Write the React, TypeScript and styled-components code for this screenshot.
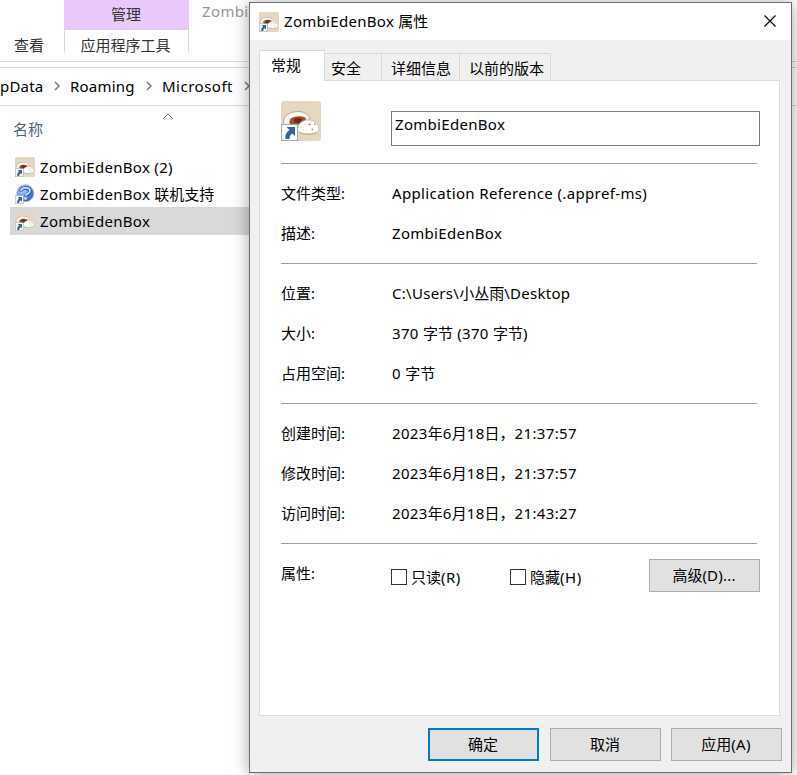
import React from "react";
import styled, { createGlobalStyle } from "styled-components";

const GlobalStyle = createGlobalStyle`
  * { box-sizing: border-box; }
  body {
    margin: 0;
    background: #fff;
    color: #000;
    font: 15px/20px "Noto Sans", "Noto Sans CJK SC", sans-serif;
    overflow: hidden;
  }
`;

const Desktop = styled.main`
  position: relative;
  width: 797px;
  height: 775px;
  overflow: hidden;
  background: #fff;
`;

const Text = styled.span`
  display: block;
  height: 20px;
  white-space: pre;
  margin: -1px 0 1px;
`;

/* ---------- Explorer ---------- */

const Explorer = styled.section`
  display: flex;
  flex-direction: column;
  height: 100%;
`;

const Ribbon = styled.header`
  display: grid;
  grid-template-columns: 64px 125px 1fr;
  height: 62px;
  border-bottom: 1px solid #dadbdc;
`;

const RibbonTab = styled.div`
  padding: 35px 0 0 14px;
  color: #333;
`;

const ContextTab = styled.div`
  display: flex;
  flex-direction: column;
`;

const ContextTitle = styled.div`
  height: 30px;
  padding: 4px 1px 0 0;
  text-align: center;
  color: #333;
  background: #e9c9fc;
`;

const ContextName = styled.div`
  height: 24px;
  padding: 6px 2px 0 0;
  display: flex;
  justify-content: center;
  color: #333;
  border: 1px solid;
  border-width: 0 1px;
  border-image: linear-gradient(#dcdcdc, #d4d4d4 70%, #f4f4f4) 1;
`;

const WindowTitle = styled.div`
  padding: 2px 0 0 13px;
  color: #999;
`;

const AddressBar = styled.nav`
  display: flex;
  align-items: center;
  height: 39px;
  margin-top: 5px;
  border-top: 1px solid #d9d9d9;
  border-bottom: 1px solid #d9d9d9;
`;

const Crumb = styled.div<{ $width: number }>`
  flex: none;
  width: ${(p) => p.$width}px;
`;

const Chevron = styled.svg<{ $gap: number }>`
  flex: none;
  display: block;
  margin: -2px ${(p) => p.$gap}px 0 0;
`;

const ColumnHeader = styled.div`
  display: flex;
  height: 47px;
  padding: 14px 0 0 13px;
  color: #4c607a;
`;

const SortArrow = styled.svg`
  display: block;
  margin: -7px 0 0 120px;
`;

const FileList = styled.div`
  display: flex;
  flex-direction: column;
  padding-left: 10px;
`;

const FileRow = styled.div<{ $selected?: boolean }>`
  display: flex;
  align-items: center;
  gap: 5px;
  width: 500px;
  height: ${(p) => (p.$selected ? 28 : 27)}px;
  padding-left: 5px;
  background: ${(p) => (p.$selected ? "#d9d9d9" : "transparent")};

  ${Text} {
    margin: 0;
  }
`;

/* ---------- Dialog ---------- */

const Dialog = styled.section`
  position: absolute;
  left: 249px;
  top: 2px;
  width: 543px;
  height: 771px;
  display: flex;
  flex-direction: column;
  border: 1px solid #6e6e6e;
  background: #f0f0f0;
  box-shadow: 0 1px 16px rgba(0, 0, 0, 0.36);
`;

const TitleBar = styled.header`
  display: flex;
  align-items: center;
  height: 37px;
  padding: 0 15px 0 9px;
  background: #fff;
`;

const Caption = styled.div`
  flex: 1;
  padding-left: 5px;
`;

const CloseIcon = styled.svg`
  display: block;
  flex: none;
  margin-top: -1px;
`;

const Tabs = styled.div`
  display: flex;
  align-items: flex-end;
  height: 40px;
  margin: 0 0 0 9px;
`;

const Tab = styled.div<{ $width: number; $pad: number; $active?: boolean }>`
  position: relative;
  width: ${(p) => p.$width}px;
  height: ${(p) => (p.$active ? 31 : 27)}px;
  margin-bottom: ${(p) => (p.$active ? -1 : 0)}px;
  padding: 4px 0 0 ${(p) => p.$pad}px;
  border: 1px solid #d9d9d9;
  border-bottom: 0;
  border-left-width: ${(p) => (p.$active ? 1 : 0)}px;
  background: ${(p) => (p.$active ? "#fff" : "#f0f0f0")};
  z-index: ${(p) => (p.$active ? 1 : 0)};
`;

const Panel = styled.div`
  height: 636px;
  margin: 0 11px 0 9px;
  padding: 0 19px 0 21px;
  border: 1px solid #dcdcdc;
  background: #fff;
`;

const FileHead = styled.div`
  display: flex;
  align-items: flex-start;
  height: 82px;
  padding-top: 20px;
`;

const NameField = styled.div`
  width: 369px;
  height: 35px;
  margin: 10px 0 0 70px;
  padding: 3px 0 0 3px;
  border: 1px solid #7a7a7a;
  background: #fff;
`;

const Group = styled.div`
  width: 476px;
  padding: 10px 0 9px;
  border-top: 1px solid #a0a0a0;
`;

const Property = styled.div`
  display: grid;
  grid-template-columns: 111px 1fr;
  align-items: center;
  height: 40px;
`;

const Divider = styled.div`
  width: 476px;
  height: 1px;
  background: #a0a0a0;
`;

const Attributes = styled.div`
  display: flex;
  align-items: flex-start;
  width: 479px;
  height: 60px;
`;

const AttributeLabel = styled.div`
  width: 110px;
  padding-top: 20px;
`;

const CheckOption = styled.div<{ $width: number }>`
  display: flex;
  align-items: center;
  gap: 4px;
  width: ${(p) => p.$width}px;
  height: 16px;
  margin-top: 25px;

  ${Text} {
    margin: 0;
  }
`;

const CheckBox = styled.span`
  width: 16px;
  height: 16px;
  border: 1px solid #333;
  background: #fff;
`;

const Button = styled.button<{ $primary?: boolean }>`
  display: flex;
  align-items: center;
  justify-content: center;
  width: 111px;
  height: 33px;
  padding: 0 1px 0 0;
  font: inherit;
  color: #000;
  border: ${(p) => (p.$primary ? "2px solid #0078d7" : "1px solid #adadad")};
  background: #e1e1e1;
`;

const AdvancedSlot = styled.div`
  margin-top: 15px;
`;

const Footer = styled.footer`
  display: grid;
  grid-template-columns: 122px 121px 111px;
  justify-content: end;
  padding: 12px 9px 0 0;
`;

const Icon = styled.svg`
  display: block;
  flex: none;
`;

const ShortcutArrow = () => (
  <g>
    <rect x="0.5" y="23.500" width="16" height="16" fill="#f8f8f8" stroke="#a5a9ae" />
    <path d="M5.500 26H14v9l-2.800-2.600C9 34 8.500 35.500 8.500 38H4.500c-.6-4 .8-7 4-9z" fill="#2f64a6" />
  </g>
);

function BunIcon({ size }: { size: number }) {
  return (
    <Icon width={size} height={size} viewBox="0 0 40 40">
      <rect width="40" height="40" rx="3" fill="#e6d8c0" />
      <path d="M2.500 21c0-6 6-10 13-10.500 7-.4 13 2.500 13.500 8.500l-6 10-14 0c-4-1-6.500-4-6.500-8z" fill="#f4f2ea" stroke="#a39c8c" strokeWidth=".8" />
      <path d="M5 18c3-5 7-6 11-6s8 1.500 10 4.500c-7-2.500-15-2-21 1.500z" fill="#fffef9" />
      <path d="M9.500 18c3-3 10-3.500 15-1.500l.5 3c-2 2-4 3.500-8 4.500-3 .5-6 .4-7.500-.5s-1.500-3.500 0-5.500z" fill="#a3522f" />
      <path d="M13 17.500l5-.8 3.500 1.800-3.500 3.500-4.500-.5z" fill="#6f2810" />
      <path d="M16.500 28c0-5 5-9 11-9.200 5-.1 10.500 4.200 10.500 8.700 0 3.500-4 5.500-10 5.500s-11.500-1-11.500-5z" fill="#fbfbf7" stroke="#b5afa2" strokeWidth=".8" />
      <path d="M18 31.500c5 2 13 2.500 18 .5" fill="none" stroke="#bbb09a" />
      <path d="M27.500 23l1.800.9m4-1.200 1 1m-3.800 4.300 1.600.6" stroke="#85847e" strokeWidth="1.300" />
      <ShortcutArrow />
    </Icon>
  );
}

function HelpIcon() {
  return (
    <Icon width="20" height="20" viewBox="0 0 40 40">
      <defs>
        <radialGradient id="ball" cx=".35" cy=".3" r=".8">
          <stop offset="0" stopColor="#b4d2fb" />
          <stop offset=".5" stopColor="#6c9cec" />
          <stop offset="1" stopColor="#2450b8" />
        </radialGradient>
      </defs>
      <circle cx="20.500" cy="18.500" r="17" fill="url(#ball)" stroke="#a9b5d6" strokeWidth="2" />
      <path d="M11 15c1-9 19-10 19 0 0 6-8 6-9 9" fill="none" stroke="#2450b8" strokeWidth="7" />
      <path d="M11 14c2-8 19-9 19 0 0 6-8 6-9 9" fill="none" stroke="#cfe2fd" strokeWidth="3.500" />
      <circle cx="21" cy="29" r="2.400" fill="#dcebff" />
      <ShortcutArrow />
    </Icon>
  );
}

const CrumbChevron = ({ gap }: { gap: number }) => (
  <Chevron $gap={gap} width="6" height="10" viewBox="0 0 6 10">
    <path d="M1 1l4 4-4 4" fill="none" stroke="#777" strokeWidth="1.500" />
  </Chevron>
);

const Run = styled.span<{ $track: number }>`
  letter-spacing: ${(p) => p.$track}px;
`;

/* Latin and digit runs are spaced a little wider than the Chinese text. */
const Mixed = ({ children, track = 0.36 }: { children: string; track?: number }) => (
  <Text>
    {children.split(/([\u3000-\u9fff\uff00-\uffef]+)/).map((run, i) =>
      i % 2 ? run : <Run key={i} $track={track}>{run}</Run>
    )}
  </Text>
);

const Field = ({ label, value, track }: { label: string; value: string; track?: number }) => (
  <Property>
    <Text>{label}</Text>
    <Mixed track={track}>{value}</Mixed>
  </Property>
);

export default function App() {
  return (
    <Desktop>
      <GlobalStyle />
      <Explorer>
        <Ribbon>
          <RibbonTab>查看</RibbonTab>
          <ContextTab>
            <ContextTitle>管理</ContextTitle>
            <ContextName><Text>应用程序工具</Text></ContextName>
          </ContextTab>
          <WindowTitle><Mixed>Zombi</Mixed></WindowTitle>
        </Ribbon>
        <AddressBar>
          <Crumb $width={54}><Mixed track={0.2}>pData</Mixed></Crumb>
          <CrumbChevron gap={10} />
          <Crumb $width={76}><Mixed track={0.2}>Roaming</Mixed></Crumb>
          <CrumbChevron gap={10} />
          <Crumb $width={82}><Mixed track={0.5}>Microsoft</Mixed></Crumb>
          <CrumbChevron gap={0} />
        </AddressBar>
        <ColumnHeader>
          <Text>名称</Text>
          <SortArrow width="10" height="6" viewBox="0 0 10 6">
            <path d="M.5 5.500L5 1l4.500 4.500" fill="none" stroke="#555" />
          </SortArrow>
        </ColumnHeader>
        <FileList>
          <FileRow><BunIcon size={20} /><Mixed track={0.3}>ZombiEdenBox (2)</Mixed></FileRow>
          <FileRow><HelpIcon /><Mixed track={0.3}>ZombiEdenBox 联机支持</Mixed></FileRow>
          <FileRow $selected><BunIcon size={20} /><Mixed track={0.3}>ZombiEdenBox</Mixed></FileRow>
        </FileList>
      </Explorer>

      <Dialog>
        <TitleBar>
          <BunIcon size={20} />
          <Caption><Mixed track={0.3}>ZombiEdenBox 属性</Mixed></Caption>
          <CloseIcon width="12" height="12" viewBox="0 0 12 12">
            <path d="M.5.5l11 11m0-11l-11 11" stroke="#000" strokeWidth="1.100" />
          </CloseIcon>
        </TitleBar>
        <Tabs>
          <Tab $active $width={66} $pad={11}>常规</Tab>
          <Tab $width={57} $pad={6}>安全</Tab>
          <Tab $width={78} $pad={9}>详细信息</Tab>
          <Tab $width={91} $pad={9}>以前的版本</Tab>
        </Tabs>
        <Panel>
          <FileHead>
            <BunIcon size={40} />
            <NameField><Mixed track={0.3}>ZombiEdenBox</Mixed></NameField>
          </FileHead>
          <Group>
            <Field label="文件类型:" value="Application Reference (.appref-ms)" />
            <Field label="描述:" value="ZombiEdenBox" track={0.3} />
          </Group>
          <Group>
            <Field label="位置:" value={"C:\\Users\\小丛雨\\Desktop"} track={0.28} />
            <Field label="大小:" value="370 字节 (370 字节)" track={0.32} />
            <Field label="占用空间:" value="0 字节" track={0.4} />
          </Group>
          <Group>
            <Field label="创建时间:" value="2023年6月18日，21:37:57" track={0.35} />
            <Field label="修改时间:" value="2023年6月18日，21:37:57" track={0.35} />
            <Field label="访问时间:" value="2023年6月18日，21:43:27" track={0.35} />
          </Group>
          <Divider />
          <Attributes>
            <AttributeLabel><Text>属性:</Text></AttributeLabel>
            <CheckOption $width={119}><CheckBox /><Mixed track={0.5}>只读(R)</Mixed></CheckOption>
            <CheckOption $width={139}><CheckBox /><Mixed track={0.5}>隐藏(H)</Mixed></CheckOption>
            <AdvancedSlot><Button><Mixed track={0.2}>高级(D)...</Mixed></Button></AdvancedSlot>
          </Attributes>
        </Panel>
        <Footer>
          <Button $primary><Text>确定</Text></Button>
          <Button><Text>取消</Text></Button>
          <Button><Mixed>应用(A)</Mixed></Button>
        </Footer>
      </Dialog>
    </Desktop>
  );
}
